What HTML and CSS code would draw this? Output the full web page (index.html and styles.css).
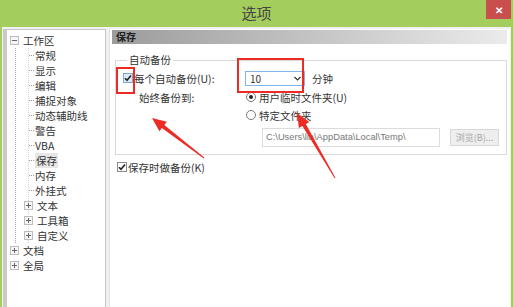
FILE: index.html
```html
<!DOCTYPE html>
<html lang="zh-CN">
<head>
    <meta charset="UTF-8">
    <title>选项</title>
    <link rel="stylesheet" href="styles.css">
</head>
<body>
    <div class="window">
        <div class="titlebar">
            <span class="title">选项</span>
            <span class="close">✕</span>
        </div>
        <div class="body">
            <div class="tree">
                <div class="row"><span class="exp minus"></span>工作区</div>
                <div class="children">
                    <div class="sub">
                        <div class="row leaf">常规</div>
                        <div class="row leaf">显示</div>
                        <div class="row leaf">编辑</div>
                        <div class="row leaf">捕捉对象</div>
                        <div class="row leaf">动态辅助线</div>
                        <div class="row leaf">警告</div>
                        <div class="row leaf">VBA</div>
                        <div class="row leaf"><span class="sel">保存</span></div>
                        <div class="row leaf">内存</div>
                        <div class="row leaf">外挂式</div>
                        <div class="row branch"><span class="exp plus"></span>文本</div>
                        <div class="row branch"><span class="exp plus"></span>工具箱</div>
                        <div class="row branch"><span class="exp plus"></span>自定义</div>
                    </div>
                </div>
                <div class="row"><span class="exp plus"></span>文档</div>
                <div class="row"><span class="exp plus"></span>全局</div>
            </div>
            <div class="panel">
                <div class="panel-head">保存</div>
                <fieldset class="group">
                    <legend>自动备份</legend>
                    <div class="group-grid">
                        <div class="cell">
                            <span class="check focus"><svg width="8" height="8" viewBox="0 0 8 8"><path d="M1 4.2 L3 6.3 L7 1.5" fill="none" stroke="#222" stroke-width="1.6"/></svg></span>
                            <span class="lbl">每个自动备份(U):</span>
                        </div>
                        <div class="cell">
                            <span class="select">10<svg width="7" height="5" viewBox="0 0 7 5"><path d="M0.5 1 L3.5 4 L6.5 1" fill="none" stroke="#333" stroke-width="1.2"/></svg></span>
                            <span class="unit">分钟</span>
                        </div>
                        <div class="cell indent">始终备份到:</div>
                        <div class="cell"><span class="radio on"></span>用户临时文件夹(U)</div>
                        <div class="cell"></div>
                        <div class="cell"><span class="radio"></span>特定文件夹</div>
                        <div class="cell"></div>
                        <div class="cell path-row">
                            <span class="path">C:\Users\lia\AppData\Local\Temp\</span>
                            <span class="browse">浏览(B)...</span>
                        </div>
                    </div>
                </fieldset>
                <div class="cell bottom-check">
                    <span class="check"><svg width="8" height="8" viewBox="0 0 8 8"><path d="M1 4.2 L3 6.3 L7 1.5" fill="none" stroke="#222" stroke-width="1.6"/></svg></span>
                    <span class="lbl">保存时做备份(K)</span>
                </div>
            </div>
        </div>
        <svg class="marks" width="513" height="307" viewBox="0 0 513 307">
            <rect x="117" y="68" width="17" height="25" fill="none" stroke="#ec2b25" stroke-width="2"/>
            <rect x="238" y="59" width="65" height="33" fill="none" stroke="#ec2b25" stroke-width="2"/>
            <polygon points="204.3,157.6 164.3,124.9 166.8,121.8 152,118 159.4,131.3 161.9,128.1 203.7,158.4" fill="#ec2b25"/>
            <polygon points="335.4,177.7 305.8,124.1 309.3,122.1 297,113 298.9,128.1 302.4,126.1 334.6,178.3" fill="#ec2b25"/>
        </svg>
    </div>
</body>
</html>
```

FILE: styles.css
```css
body {
    margin: 0;
    font-family: "Noto Sans CJK SC", sans-serif;
    color: #333;
}
.window {
    position: relative;
    width: 513px;
    height: 307px;
    box-sizing: border-box;
    padding: 0 2px;
    background-color: #a3cd5c;
    display: flex;
    flex-direction: column;
    overflow: hidden;
}
.titlebar {
    height: 27px;
    display: grid;
    grid-template-columns: 1fr auto 1fr;
}
.title {
    grid-column: 2;
    font-size: 15px;
    line-height: 26px;
    color: #444;
}
.close {
    grid-column: 3;
    justify-self: end;
    width: 25px;
    height: 19px;
    background-color: #c94f4f;
    color: white;
    font-size: 10px;
    font-weight: bold;
    line-height: 19px;
    text-align: center;
}
.body {
    flex: 1;
    display: flex;
    gap: 3px;
    padding-top: 2px;
    background-color: #f1f1f1;
}
.tree {
    width: 103px;
    margin-left: 1px;
    box-sizing: border-box;
    padding-top: 3px;
    background-color: white;
    border: 1px solid #c6c6c6;
    border-left: 4px solid #c9c9c9;
    border-bottom: none;
    font-size: 10.5px;
}
.row {
    height: 15px;
    line-height: 15px;
    display: flex;
    align-items: center;
    white-space: nowrap;
}
.exp {
    width: 7px;
    height: 7px;
    margin: 0 4px 0 3px;
    border: 1px solid #bdbdbd;
    background-color: #f6f6f6;
    position: relative;
    flex-shrink: 0;
}
.exp::before {
    content: "";
    position: absolute;
    left: 1px;
    top: 3px;
    width: 5px;
    height: 1px;
    background-color: #666;
}
.exp.plus::after {
    content: "";
    position: absolute;
    left: 3px;
    top: 1px;
    width: 1px;
    height: 5px;
    background-color: #666;
}
.children {
    margin-left: 8px;
    border-left: 1px dotted #a8a8a8;
}
.sub {
    margin-left: 12px;
    border-left: 1px dotted #d4d4d4;
}
.leaf::before {
    content: "";
    width: 5px;
    margin-right: 1px;
    border-top: 1px dotted #9a9a9a;
}
.branch .exp {
    margin: 0 4px 0 -5px;
}
.sel {
    background-color: #e6e6e6;
    padding: 0 1px;
}
.panel {
    flex: 1;
    margin-right: 1px;
    padding-top: 1px;
    background-color: white;
    border-left: 1px solid #e4e4e4;
    font-size: 10.5px;
}
.panel-head {
    height: 14px;
    margin: 0 3px 0 2px;
    padding-left: 4px;
    background: linear-gradient(to right, #9c9c9c, #ebebeb);
    font-size: 10px;
    font-weight: bold;
    line-height: 14px;
    color: #222;
}
.group {
    margin: 9px 3px 0 5px;
    padding: 2px 0 7px 7px;
    border: 1px solid #dadada;
}
.group legend {
    margin-left: 4px;
    padding: 0 2px;
    line-height: 14px;
}
.group-grid {
    display: grid;
    grid-template-columns: 122px auto;
    grid-template-rows: 18px 20px 16px auto;
}
.cell {
    display: flex;
    align-items: center;
    white-space: nowrap;
}
.indent {
    padding-left: 16px;
}
.check {
    width: 8px;
    height: 8px;
    border: 1px solid #8c8c8c;
    background-color: white;
    display: flex;
    align-items: center;
    justify-content: center;
    margin-right: 1px;
}
.check.focus {
    border-color: #7aa7d6;
    background-color: #dcebfa;
}
.select {
    width: 60px;
    height: 15px;
    box-sizing: border-box;
    padding: 0 3px 0 4px;
    border: 1px solid #7fb5e8;
    font-size: 10px;
    display: flex;
    align-items: center;
    justify-content: space-between;
}
.unit {
    margin-left: 7px;
}
.radio {
    width: 8px;
    height: 8px;
    margin: 0 3px 0 1px;
    border: 1px solid #777;
    border-radius: 50%;
    display: flex;
    align-items: center;
    justify-content: center;
}
.radio.on::after {
    content: "";
    width: 4px;
    height: 4px;
    border-radius: 50%;
    background-color: #222;
}
.path-row {
    margin-top: 5px;
    padding-left: 17px;
    gap: 10px;
}
.path {
    width: 178px;
    height: 19px;
    box-sizing: border-box;
    padding-left: 3px;
    border: 1px solid #dcdcdc;
    font-family: "Liberation Sans", sans-serif;
    font-size: 9.3px;
    line-height: 17px;
    color: #777;
}
.browse {
    width: 49px;
    height: 17px;
    box-sizing: border-box;
    border: 1px solid #d8d8d8;
    background-color: #eeeeee;
    font-size: 9px;
    line-height: 15px;
    text-align: center;
    color: #a6a6a6;
}
.bottom-check {
    height: 14px;
    margin: 5px 0 0 7px;
}
.marks {
    position: absolute;
    left: 0;
    top: 0;
    pointer-events: none;
}
```
